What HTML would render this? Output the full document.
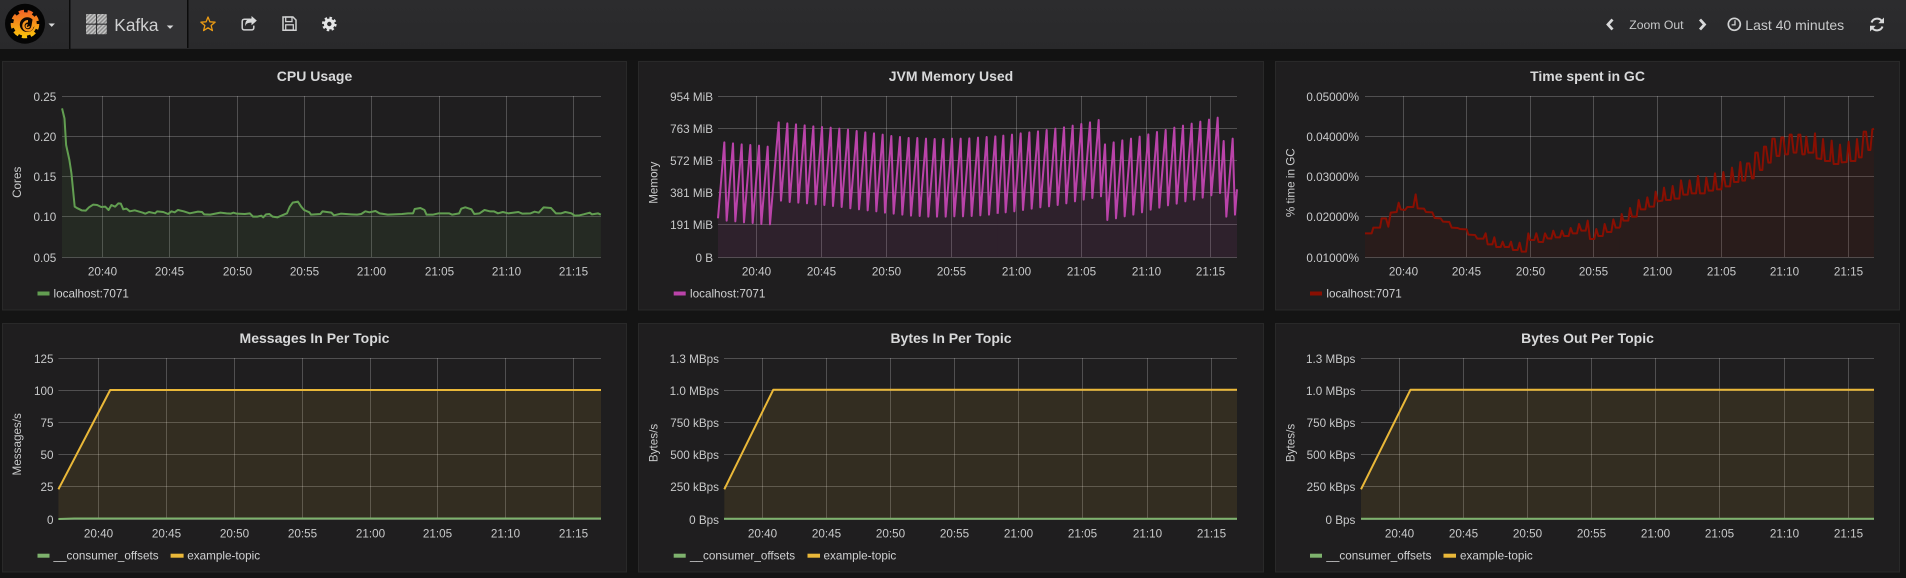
<!DOCTYPE html>
<html>
<head>
<meta charset="utf-8">
<title>Kafka</title>
<style>
html,body{margin:0;padding:0;background:#141414;width:1906px;height:578px;overflow:hidden}
svg{display:block;font-family:"Liberation Sans",sans-serif}
.panel{fill:#1f1e1f;stroke:#292929;stroke-width:1}
.grid line{stroke:rgba(255,255,255,.22);stroke-width:1}
.t{font-size:14px;font-weight:bold;fill:#d8d9da;text-anchor:middle}
.yt text{font-size:11.7px;fill:#c8c9ca;text-anchor:end}
.xt text{font-size:11.7px;fill:#c8c9ca;text-anchor:middle}
.ax{font-size:11.7px;fill:#c8c9ca;text-anchor:middle}
.lg{font-size:11.7px;fill:#d0d1d2}
.s{fill:none;stroke-width:2;vector-effect:non-scaling-stroke;stroke-linejoin:round}
.f{stroke:none;fill-opacity:.1}
</style>
</head>
<body>
<svg width="1906" height="578" viewBox="0 0 1906 578" xmlns="http://www.w3.org/2000/svg">
<defs>
<linearGradient id="gf" gradientUnits="userSpaceOnUse" x1="0" y1="8" x2="0" y2="39"><stop offset="0" stop-color="#f05a28"/><stop offset="1" stop-color="#fbca0a"/></linearGradient>
<linearGradient id="nav" x1="0" y1="0" x2="0" y2="1"><stop offset="0" stop-color="#2c2c2e"/><stop offset="1" stop-color="#29292b"/></linearGradient>
<pattern id="hatch" width="2.828" height="2.828" patternUnits="userSpaceOnUse" patternTransform="rotate(45)"><rect width="2.828" height="2.828" fill="#8a8a8a"/><rect width="1.414" height="2.828" fill="#c4c4c4"/></pattern>
</defs>
<rect width="1906" height="578" fill="#141414"/>
<rect y="49" width="1906" height="11" fill="#121212"/>

<!-- NAV -->
<rect width="1906" height="49" fill="url(#nav)"/>
<rect x="70" width="117" height="48" fill="#323234"/>
<rect x="69" width="1.5" height="49" fill="#0b0b0b"/>
<rect x="187" width="1.5" height="48" fill="#0b0b0b"/>
<circle cx="25" cy="23.7" r="20" fill="#050505"/>
<circle cx="25" cy="24" r="11.8" fill="url(#gf)"/>
<circle cx="25" cy="24" r="12.6" fill="none" stroke="url(#gf)" stroke-width="3.4" stroke-dasharray="5.2 3.6"/>
<circle cx="27.2" cy="24.6" r="7.4" fill="#0e0703"/>
<path d="M32.5 19.6L37 16 35 26 31 29z" fill="url(#gf)"/>
<path d="M28 21.2a4.6 4.6 0 1 0 4.6 4.6" fill="none" stroke="#f7941d" stroke-width="2.3"/>
<path d="M27.6 24.6a1.5 1.5 0 1 0 1.6 1.5" fill="none" stroke="#f7941d" stroke-width="1.3"/>
<path d="M48.5 23.5h6.4l-3.2 3.4z" fill="#d8d9da"/>
<rect x="86" y="14" width="10" height="9.6" rx="1" fill="url(#hatch)"/>
<rect x="97" y="14" width="9.8" height="9.6" rx="1" fill="url(#hatch)"/>
<rect x="86" y="24.8" width="10" height="9.4" rx="1" fill="url(#hatch)"/>
<rect x="97" y="24.8" width="9.8" height="9.4" rx="1" fill="url(#hatch)"/>
<text x="114.3" y="31" font-size="17.3" fill="#d0d1d2">Kafka</text>
<path d="M166.8 25.5h6.6l-3.3 3.4z" fill="#d8d9da"/>
<polygon transform="translate(208 24.5)" points="0,-7.5 1.94,-2.67 7.13,-2.32 3.14,1.02 4.41,6.07 0,3.3 -4.41,6.07 -3.14,1.02 -7.13,-2.32 -1.94,-2.67" fill="none" stroke="#eb9b14" stroke-width="1.3" stroke-linejoin="round"/>
<path d="M250 19.3h-5.5q-2.3 0-2.3 2.3v6q0 2.3 2.3 2.3h7q2.3 0 2.3-2.3v-2" fill="none" stroke="#d0d1d2" stroke-width="1.5"/>
<path d="M251.5 16l5.3 4.6-5.3 4.7v-2.7q-5.6-.2-6.2 3.6-.7-7.3 6.2-7.7z" fill="#d8d9da"/>
<path d="M283 17h10l3 3v10.2h-13z" fill="none" stroke="#d0d1d2" stroke-width="1.5"/>
<rect x="285.7" y="17" width="6.3" height="4.6" fill="none" stroke="#d0d1d2" stroke-width="1.3"/>
<rect x="285.7" y="24.8" width="7.6" height="5.2" fill="none" stroke="#d0d1d2" stroke-width="1.3"/>
<circle cx="329.3" cy="24" r="3.8" fill="none" stroke="#e4e5e6" stroke-width="3.2"/>
<circle cx="329.3" cy="24" r="6" fill="none" stroke="#e4e5e6" stroke-width="2.6" stroke-dasharray="2.4 2.31"/>

<polyline points="1612.5,19.5 1608,24.5 1612.5,29.5" fill="none" stroke="#d8d9da" stroke-width="2.8"/>
<text x="1629.3" y="29" font-size="12.2" fill="#c8c9ca">Zoom Out</text>
<polyline points="1700,19.5 1704.5,24.5 1700,29.5" fill="none" stroke="#d8d9da" stroke-width="2.8"/>
<circle cx="1734.3" cy="24.3" r="6" fill="none" stroke="#d0d1d2" stroke-width="1.7"/>
<path d="M1735 20.3v4.6h-3.4" fill="none" stroke="#d0d1d2" stroke-width="1.3"/>
<text x="1745.3" y="30" font-size="14" fill="#c8c9ca">Last 40 minutes</text>
<path d="M1871.5 22.5A6 6 0 0 1 1881.5 20.5" fill="none" stroke="#d8d9da" stroke-width="2"/>
<path d="M1884 17.5v5.7h-5.7z" fill="#d8d9da"/>
<path d="M1882.5 26.5A6 6 0 0 1 1872.5 28.5" fill="none" stroke="#d8d9da" stroke-width="2"/>
<path d="M1870 31.5v-5.7h5.7z" fill="#d8d9da"/>

<!-- PANELS -->
<rect class="panel" x="2.5" y="61.5" width="624" height="248.5"/>
<rect class="panel" x="638.5" y="61.5" width="625" height="248.5"/>
<rect class="panel" x="1275.5" y="61.5" width="624" height="248.5"/>
<rect class="panel" x="2.5" y="323.5" width="624" height="248.5"/>
<rect class="panel" x="638.5" y="323.5" width="625" height="248.5"/>
<rect class="panel" x="1275.5" y="323.5" width="624" height="248.5"/>

<!-- P1 CPU -->
<text class="t" x="314.5" y="81">CPU Usage</text>
<g class="grid">
<line x1="62" x2="601" y1="96.5" y2="96.5"/><line x1="62" x2="601" y1="136.5" y2="136.5"/><line x1="62" x2="601" y1="176.5" y2="176.5"/><line x1="62" x2="601" y1="216.5" y2="216.5"/><line x1="62" x2="601" y1="257.5" y2="257.5"/>
<line x1="102.5" x2="102.5" y1="96" y2="257"/><line x1="169.5" x2="169.5" y1="96" y2="257"/><line x1="237.5" x2="237.5" y1="96" y2="257"/><line x1="304.5" x2="304.5" y1="96" y2="257"/><line x1="371.5" x2="371.5" y1="96" y2="257"/><line x1="439.5" x2="439.5" y1="96" y2="257"/><line x1="506.5" x2="506.5" y1="96" y2="257"/><line x1="573.5" x2="573.5" y1="96" y2="257"/>
</g>
<g class="yt"><text x="56.3" y="101">0.25</text><text x="56.3" y="141">0.20</text><text x="56.3" y="181">0.15</text><text x="56.3" y="221">0.10</text><text x="56.3" y="262">0.05</text></g>
<g class="xt"><text x="102.5" y="275.5">20:40</text><text x="169.5" y="275.5">20:45</text><text x="237.5" y="275.5">20:50</text><text x="304.5" y="275.5">20:55</text><text x="371.5" y="275.5">21:00</text><text x="439.5" y="275.5">21:05</text><text x="506.5" y="275.5">21:10</text><text x="573.5" y="275.5">21:15</text></g>
<text class="ax" transform="translate(21 182.3) rotate(-90)">Cores</text>
<g transform="translate(0 50) scale(.40816 .33333)">
<polygon class="f" fill="#629E51" points="152,175 158,205 162,285 170,330 175,370 183,470 190,475 200,481 210,482 218,472 228,464 238,465 248,471 258,470 266,480 273,465 282,470 290,460 296,461 302,478 310,476 318,484 330,481 350,488 356,491 365,486 380,490 385,484 400,486 412,492 420,484 428,487 436,480 450,484 465,490 485,485 495,486 500,493 515,494 540,488 555,490 565,491 572,488 580,491 600,492 612,490 620,500 630,500 640,497 645,502 652,493 660,492 668,500 680,502 695,494 703,490 710,470 717,458 730,455 738,470 745,480 758,487 762,494 785,492 790,484 812,488 818,496 835,491 860,493 875,494 885,492 895,484 905,487 920,483 930,490 950,494 985,492 1000,490 1012,490 1016,477 1030,474 1040,480 1045,494 1060,494 1075,490 1100,490 1108,494 1125,490 1130,476 1140,472 1155,478 1162,492 1175,490 1187,480 1200,484 1210,484 1220,490 1232,486 1245,490 1270,486 1280,491 1300,490 1310,485 1320,488 1332,472 1350,474 1362,490 1375,490 1385,486 1400,490 1408,497 1420,496 1430,493 1445,488 1450,493 1465,490 1472,494 1472,622.5 152,622.5"/>
<polyline class="s" stroke="#629E51" points="152,175 158,205 162,285 170,330 175,370 183,470 190,475 200,481 210,482 218,472 228,464 238,465 248,471 258,470 266,480 273,465 282,470 290,460 296,461 302,478 310,476 318,484 330,481 350,488 356,491 365,486 380,490 385,484 400,486 412,492 420,484 428,487 436,480 450,484 465,490 485,485 495,486 500,493 515,494 540,488 555,490 565,491 572,488 580,491 600,492 612,490 620,500 630,500 640,497 645,502 652,493 660,492 668,500 680,502 695,494 703,490 710,470 717,458 730,455 738,470 745,480 758,487 762,494 785,492 790,484 812,488 818,496 835,491 860,493 875,494 885,492 895,484 905,487 920,483 930,490 950,494 985,492 1000,490 1012,490 1016,477 1030,474 1040,480 1045,494 1060,494 1075,490 1100,490 1108,494 1125,490 1130,476 1140,472 1155,478 1162,492 1175,490 1187,480 1200,484 1210,484 1220,490 1232,486 1245,490 1270,486 1280,491 1300,490 1310,485 1320,488 1332,472 1350,474 1362,490 1375,490 1385,486 1400,490 1408,497 1420,496 1430,493 1445,488 1450,493 1465,490 1472,494"/>
</g>
<rect x="37.5" y="291.5" width="12" height="4" fill="#629E51"/>
<text class="lg" x="53.5" y="297.5">localhost:7071</text>

<!-- P2 JVM -->
<text class="t" x="951" y="81">JVM Memory Used</text>
<g class="grid">
<line x1="718" x2="1237" y1="96.5" y2="96.5"/><line x1="718" x2="1237" y1="128.5" y2="128.5"/><line x1="718" x2="1237" y1="160.5" y2="160.5"/><line x1="718" x2="1237" y1="192.5" y2="192.5"/><line x1="718" x2="1237" y1="224.5" y2="224.5"/><line x1="718" x2="1237" y1="257.5" y2="257.5"/>
<line x1="756.5" x2="756.5" y1="96" y2="257"/><line x1="821.5" x2="821.5" y1="96" y2="257"/><line x1="886.5" x2="886.5" y1="96" y2="257"/><line x1="951.5" x2="951.5" y1="96" y2="257"/><line x1="1016.5" x2="1016.5" y1="96" y2="257"/><line x1="1081.5" x2="1081.5" y1="96" y2="257"/><line x1="1146.5" x2="1146.5" y1="96" y2="257"/><line x1="1210.5" x2="1210.5" y1="96" y2="257"/>
</g>
<g class="yt"><text x="713" y="101">954 MiB</text><text x="713" y="133">763 MiB</text><text x="713" y="165">572 MiB</text><text x="713" y="197">381 MiB</text><text x="713" y="229">191 MiB</text><text x="713" y="262">0 B</text></g>
<g class="xt"><text x="756.5" y="275.5">20:40</text><text x="821.5" y="275.5">20:45</text><text x="886.5" y="275.5">20:50</text><text x="951.5" y="275.5">20:55</text><text x="1016.5" y="275.5">21:00</text><text x="1081.5" y="275.5">21:05</text><text x="1146.5" y="275.5">21:10</text><text x="1210.5" y="275.5">21:15</text></g>
<text class="ax" transform="translate(657.5 182.7) rotate(-90)">Memory</text>
<g transform="translate(700 90) scale(.33333)">
<polygon class="f" fill="#BA43A9" points="54,385 73,157 80,392 99,160 106,394 125,163 132,397 151,165 158,399 177,167 184,402 203,170 210,403 236,97 243,332 262,100 269,336 288,103 295,338 314,106 321,340 340,109 347,343 366,111 373,345 392,113 399,348 418,116 425,351 444,119 451,355 470,123 477,358 496,127 503,361 522,130 529,364 548,134 555,368 574,138 581,371 600,141 607,374 626,144 633,377 652,144 659,378 678,146 685,380 704,147 711,380 730,147 737,380 756,146 763,379 782,146 789,379 808,145 815,378 834,143 841,376 860,141 867,374 886,139 893,371 893,502.5 54,502.5"/>
<polyline class="s" stroke="#BA43A9" points="54,385 73,157 80,392 99,160 106,394 125,163 132,397 151,165 158,399 177,167 184,402 203,170 210,403 236,97 243,332 262,100 269,336 288,103 295,338 314,106 321,340 340,109 347,343 366,111 373,345 392,113 399,348 418,116 425,351 444,119 451,355 470,123 477,358 496,127 503,361 522,130 529,364 548,134 555,368 574,138 581,371 600,141 607,374 626,144 633,377 652,144 659,378 678,146 685,380 704,147 711,380 730,147 737,380 756,146 763,379 782,146 789,379 808,145 815,378 834,143 841,376 860,141 867,374 886,139 893,371"/>
</g>
<g transform="translate(1000 90) scale(.33333)">
<polygon class="f" fill="#BA43A9" points="-7,371 10,137 17,367 36,134 43,364 62,130 69,360 88,127 95,356 114,124 121,352 140,120 147,349 166,116 173,345 192,112 199,340 218,107 225,334 244,102 251,329 270,97 277,324 296,90 303,319 315,163 322,390 341,157 348,385 367,151 374,379 393,146 400,374 419,140 426,367 445,133 452,359 471,126 478,353 497,120 504,346 523,113 530,341 549,107 556,334 575,101 582,329 601,95 608,323 627,89 634,316 653,83 660,309 671,153 679,380 698,146 705,374 711,298 711,502.5 -7,502.5"/>
<polyline class="s" stroke="#BA43A9" points="-7,371 10,137 17,367 36,134 43,364 62,130 69,360 88,127 95,356 114,124 121,352 140,120 147,349 166,116 173,345 192,112 199,340 218,107 225,334 244,102 251,329 270,97 277,324 296,90 303,319 315,163 322,390 341,157 348,385 367,151 374,379 393,146 400,374 419,140 426,367 445,133 452,359 471,126 478,353 497,120 504,346 523,113 530,341 549,107 556,334 575,101 582,329 601,95 608,323 627,89 634,316 653,83 660,309 671,153 679,380 698,146 705,374 711,298"/>
</g>
<rect x="673.7" y="291.5" width="12" height="4" fill="#BA43A9"/>
<text class="lg" x="690" y="297.5">localhost:7071</text>

<!-- P3 GC -->
<text class="t" x="1587.5" y="81">Time spent in GC</text>
<g class="grid">
<line x1="1365" x2="1874" y1="96.5" y2="96.5"/><line x1="1365" x2="1874" y1="136.5" y2="136.5"/><line x1="1365" x2="1874" y1="176.5" y2="176.5"/><line x1="1365" x2="1874" y1="216.5" y2="216.5"/><line x1="1365" x2="1874" y1="257.5" y2="257.5"/>
<line x1="1403.5" x2="1403.5" y1="96" y2="257"/><line x1="1466.5" x2="1466.5" y1="96" y2="257"/><line x1="1530.5" x2="1530.5" y1="96" y2="257"/><line x1="1593.5" x2="1593.5" y1="96" y2="257"/><line x1="1657.5" x2="1657.5" y1="96" y2="257"/><line x1="1721.5" x2="1721.5" y1="96" y2="257"/><line x1="1784.5" x2="1784.5" y1="96" y2="257"/><line x1="1848.5" x2="1848.5" y1="96" y2="257"/>
</g>
<g class="yt"><text x="1359" y="101">0.05000%</text><text x="1359" y="141">0.04000%</text><text x="1359" y="181">0.03000%</text><text x="1359" y="221">0.02000%</text><text x="1359" y="262">0.01000%</text></g>
<g class="xt"><text x="1403.5" y="275.5">20:40</text><text x="1466.5" y="275.5">20:45</text><text x="1530.5" y="275.5">20:50</text><text x="1593.5" y="275.5">20:55</text><text x="1657.5" y="275.5">21:00</text><text x="1721.5" y="275.5">21:05</text><text x="1784.5" y="275.5">21:10</text><text x="1848.5" y="275.5">21:15</text></g>
<text class="ax" transform="translate(1294.5 182.7) rotate(-90)">% time in GC</text>
<g transform="translate(1350 130) scale(.33333)">
<polygon class="f" fill="#890F02" points="45,310 65,310 70,293 90,293 95,265 108,265 115,290 122,248 140,246 146,218 152,238 165,240 172,231 190,231 197,193 203,235 222,236 228,246 247,247 254,264 272,265 279,275 298,276 305,293 323,294 330,297 350,298 355,314 375,315 382,326 400,326 407,310 413,343 427,343 433,322 439,351 452,351 458,335 464,351 477,351 483,335 489,360 503,360 509,338 515,365 528,365 535,310 540,330 553,330 559,310 566,336 579,336 585,310 592,325 604,326 610,302 617,322 630,322 636,302 642,318 656,318 662,294 668,310 681,310 687,282 694,302 707,302 713,272 720,327 733,327 739,297 745,318 758,318 764,282 771,306 784,306 790,268 797,293 810,293 810,382.5 45,382.5"/>
<polyline class="s" stroke="#890F02" points="45,310 65,310 70,293 90,293 95,265 108,265 115,290 122,248 140,246 146,218 152,238 165,240 172,231 190,231 197,193 203,235 222,236 228,246 247,247 254,264 272,265 279,275 298,276 305,293 323,294 330,297 350,298 355,314 375,315 382,326 400,326 407,310 413,343 427,343 433,322 439,351 452,351 458,335 464,351 477,351 483,335 489,360 503,360 509,338 515,365 528,365 535,310 540,330 553,330 559,310 566,336 579,336 585,310 592,325 604,326 610,302 617,322 630,322 636,302 642,318 656,318 662,294 668,310 681,310 687,282 694,302 707,302 713,272 720,327 733,327 739,297 745,318 758,318 764,282 771,306 784,306 790,268 797,293 810,293"/>
</g>
<g transform="translate(1620 110) scale(.33333)">
<polygon class="f" fill="#890F02" points="0,353 5,312 10,332 25,332 30,294 36,320 50,320 56,270 62,298 76,298 82,262 88,290 102,290 107,245 113,274 127,272 132,233 138,270 152,270 158,228 164,266 178,266 183,211 190,254 203,254 209,211 215,250 228,250 234,198 240,250 254,250 259,203 266,242 279,242 285,190 291,238 304,238 310,186 317,229 330,229 336,173 342,216 355,216 361,156 367,212 375,212 381,160 388,160 396,205 401,205 406,128 413,128 420,180 427,180 432,110 438,110 445,158 452,158 457,86 464,86 470,138 478,138 484,82 490,82 496,133 504,133 509,74 515,74 521,128 529,128 535,74 541,74 547,133 554,133 559,80 565,128 580,128 585,70 590,145 604,147 609,87 615,153 630,153 635,92 641,162 655,162 660,104 665,157 680,156 686,95 692,153 706,153 711,87 717,142 725,142 731,65 738,65 745,120 751,120 757,58 762,56 762,442.5 0,442.5"/>
<polyline class="s" stroke="#890F02" points="0,353 5,312 10,332 25,332 30,294 36,320 50,320 56,270 62,298 76,298 82,262 88,290 102,290 107,245 113,274 127,272 132,233 138,270 152,270 158,228 164,266 178,266 183,211 190,254 203,254 209,211 215,250 228,250 234,198 240,250 254,250 259,203 266,242 279,242 285,190 291,238 304,238 310,186 317,229 330,229 336,173 342,216 355,216 361,156 367,212 375,212 381,160 388,160 396,205 401,205 406,128 413,128 420,180 427,180 432,110 438,110 445,158 452,158 457,86 464,86 470,138 478,138 484,82 490,82 496,133 504,133 509,74 515,74 521,128 529,128 535,74 541,74 547,133 554,133 559,80 565,128 580,128 585,70 590,145 604,147 609,87 615,153 630,153 635,92 641,162 655,162 660,104 665,157 680,156 686,95 692,153 706,153 711,87 717,142 725,142 731,65 738,65 745,120 751,120 757,58 762,56"/>
</g>
<rect x="1310" y="291.5" width="12" height="4" fill="#890F02"/>
<text class="lg" x="1326.4" y="297.5">localhost:7071</text>

<!-- P4 Messages -->
<text class="t" x="314.5" y="343">Messages In Per Topic</text>
<g class="grid">
<line x1="58.4" x2="601" y1="358.5" y2="358.5"/><line x1="58.4" x2="601" y1="390.5" y2="390.5"/><line x1="58.4" x2="601" y1="422.5" y2="422.5"/><line x1="58.4" x2="601" y1="454.5" y2="454.5"/><line x1="58.4" x2="601" y1="486.5" y2="486.5"/><line x1="58.4" x2="601" y1="519.5" y2="519.5"/>
<line x1="98.5" x2="98.5" y1="358" y2="519"/><line x1="166.5" x2="166.5" y1="358" y2="519"/><line x1="234.5" x2="234.5" y1="358" y2="519"/><line x1="302.5" x2="302.5" y1="358" y2="519"/><line x1="370.5" x2="370.5" y1="358" y2="519"/><line x1="437.5" x2="437.5" y1="358" y2="519"/><line x1="505.5" x2="505.5" y1="358" y2="519"/><line x1="573.5" x2="573.5" y1="358" y2="519"/>
</g>
<g class="yt"><text x="53.5" y="363">125</text><text x="53.5" y="395">100</text><text x="53.5" y="427">75</text><text x="53.5" y="459">50</text><text x="53.5" y="491">25</text><text x="53.5" y="524">0</text></g>
<g class="xt"><text x="98.5" y="537.5">20:40</text><text x="166.5" y="537.5">20:45</text><text x="234.5" y="537.5">20:50</text><text x="302.5" y="537.5">20:55</text><text x="370.5" y="537.5">21:00</text><text x="437.5" y="537.5">21:05</text><text x="505.5" y="537.5">21:10</text><text x="573.5" y="537.5">21:15</text></g>
<text class="ax" transform="translate(21 444.3) rotate(-90)">Messages/s</text>
<polygon class="f" fill="#EAB839" points="58.4,489.3 110.2,390 601,390 601,519 58.4,519"/>
<polyline class="s" stroke="#EAB839" points="58.4,489.3 110.2,390 601,390"/>
<polyline class="s" stroke="#7EB26D" points="58.4,519 74,518.5 601,518.5"/>
<rect x="37.5" y="553.7" width="12" height="4" fill="#7EB26D"/>
<text class="lg" x="53.5" y="559.3">__consumer_offsets</text>
<rect x="170.6" y="553.7" width="13" height="4" fill="#EAB839"/>
<text class="lg" x="187.3" y="559.3">example-topic</text>

<!-- P5 Bytes In -->
<text class="t" x="951" y="343">Bytes In Per Topic</text>
<g class="grid">
<line x1="724" x2="1237" y1="358.5" y2="358.5"/><line x1="724" x2="1237" y1="390.5" y2="390.5"/><line x1="724" x2="1237" y1="422.5" y2="422.5"/><line x1="724" x2="1237" y1="454.5" y2="454.5"/><line x1="724" x2="1237" y1="486.5" y2="486.5"/><line x1="724" x2="1237" y1="519.5" y2="519.5"/>
<line x1="762.5" x2="762.5" y1="358" y2="519"/><line x1="826.5" x2="826.5" y1="358" y2="519"/><line x1="890.5" x2="890.5" y1="358" y2="519"/><line x1="954.5" x2="954.5" y1="358" y2="519"/><line x1="1018.5" x2="1018.5" y1="358" y2="519"/><line x1="1082.5" x2="1082.5" y1="358" y2="519"/><line x1="1147.5" x2="1147.5" y1="358" y2="519"/><line x1="1211.5" x2="1211.5" y1="358" y2="519"/>
</g>
<g class="yt"><text x="719" y="363">1.3 MBps</text><text x="719" y="395">1.0 MBps</text><text x="719" y="427">750 kBps</text><text x="719" y="459">500 kBps</text><text x="719" y="491">250 kBps</text><text x="719" y="524">0 Bps</text></g>
<g class="xt"><text x="762.5" y="537.5">20:40</text><text x="826.5" y="537.5">20:45</text><text x="890.5" y="537.5">20:50</text><text x="954.5" y="537.5">20:55</text><text x="1018.5" y="537.5">21:00</text><text x="1082.5" y="537.5">21:05</text><text x="1147.5" y="537.5">21:10</text><text x="1211.5" y="537.5">21:15</text></g>
<text class="ax" transform="translate(657.5 443) rotate(-90)">Bytes/s</text>
<polygon class="f" fill="#EAB839" points="724.3,489.3 773.3,389.7 1237,389.7 1237,519 724.3,519"/>
<polyline class="s" stroke="#EAB839" points="724.3,489.3 773.3,389.7 1237,389.7"/>
<polyline class="s" stroke="#7EB26D" points="724,518.7 1237,518.7"/>
<rect x="673.7" y="553.7" width="12" height="4" fill="#7EB26D"/>
<text class="lg" x="690" y="559.3">__consumer_offsets</text>
<rect x="807.5" y="553.7" width="12.5" height="4" fill="#EAB839"/>
<text class="lg" x="823.5" y="559.3">example-topic</text>

<!-- P6 Bytes Out -->
<text class="t" x="1587.5" y="343">Bytes Out Per Topic</text>
<g class="grid">
<line x1="1361" x2="1874" y1="358.5" y2="358.5"/><line x1="1361" x2="1874" y1="390.5" y2="390.5"/><line x1="1361" x2="1874" y1="422.5" y2="422.5"/><line x1="1361" x2="1874" y1="454.5" y2="454.5"/><line x1="1361" x2="1874" y1="486.5" y2="486.5"/><line x1="1361" x2="1874" y1="519.5" y2="519.5"/>
<line x1="1399.5" x2="1399.5" y1="358" y2="519"/><line x1="1463.5" x2="1463.5" y1="358" y2="519"/><line x1="1527.5" x2="1527.5" y1="358" y2="519"/><line x1="1591.5" x2="1591.5" y1="358" y2="519"/><line x1="1655.5" x2="1655.5" y1="358" y2="519"/><line x1="1719.5" x2="1719.5" y1="358" y2="519"/><line x1="1784.5" x2="1784.5" y1="358" y2="519"/><line x1="1848.5" x2="1848.5" y1="358" y2="519"/>
</g>
<g class="yt"><text x="1355.4" y="363">1.3 MBps</text><text x="1355.4" y="395">1.0 MBps</text><text x="1355.4" y="427">750 kBps</text><text x="1355.4" y="459">500 kBps</text><text x="1355.4" y="491">250 kBps</text><text x="1355.4" y="524">0 Bps</text></g>
<g class="xt"><text x="1399.5" y="537.5">20:40</text><text x="1463.5" y="537.5">20:45</text><text x="1527.5" y="537.5">20:50</text><text x="1591.5" y="537.5">20:55</text><text x="1655.5" y="537.5">21:00</text><text x="1719.5" y="537.5">21:05</text><text x="1784.5" y="537.5">21:10</text><text x="1848.5" y="537.5">21:15</text></g>
<text class="ax" transform="translate(1294.5 443) rotate(-90)">Bytes/s</text>
<polygon class="f" fill="#EAB839" points="1361,489.3 1410.5,389.7 1874,389.7 1874,519 1361,519"/>
<polyline class="s" stroke="#EAB839" points="1361,489.3 1410.5,389.7 1874,389.7"/>
<polyline class="s" stroke="#7EB26D" points="1361,518.7 1874,518.7"/>
<rect x="1310" y="553.7" width="12" height="4" fill="#7EB26D"/>
<text class="lg" x="1326.4" y="559.3">__consumer_offsets</text>
<rect x="1443.5" y="553.7" width="12.5" height="4" fill="#EAB839"/>
<text class="lg" x="1460" y="559.3">example-topic</text>
</svg>
</body>
</html>
